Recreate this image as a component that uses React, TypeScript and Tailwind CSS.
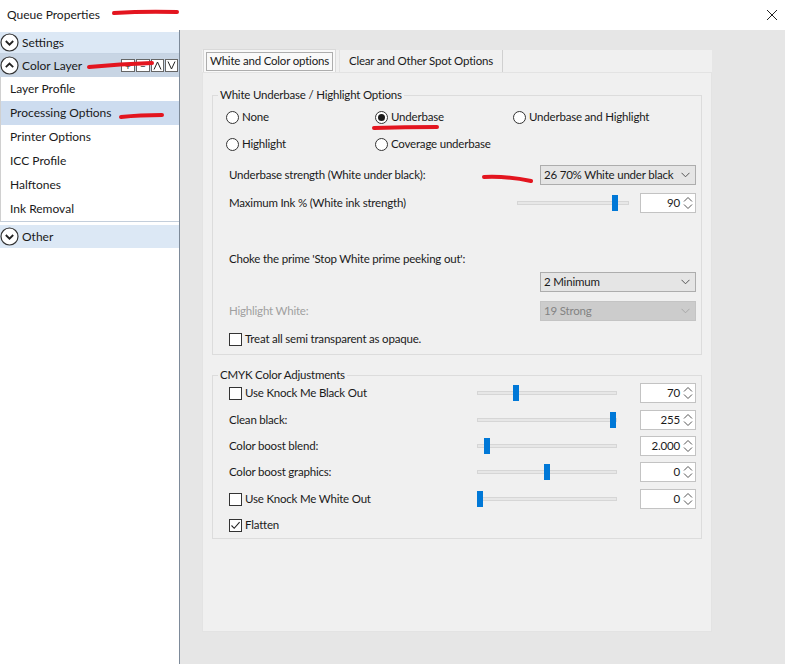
import type { ReactNode } from "react";

const FONT = { fontFamily: 'Lato, "Noto Sans", sans-serif' };

function CircleChevron({ up }: { up?: boolean }) {
  return (
    <svg width="19" height="19" viewBox="0 0 19 19" className="shrink-0">
      <circle cx="9.5" cy="9.5" r="8.5" fill="white" stroke="#333" strokeWidth="1.2" />
      {up ? (
        <path d="M5.8 11.2 L9.5 7.5 L13.2 11.2" fill="none" stroke="#222" strokeWidth="1.8" />
      ) : (
        <path d="M5.8 8 L9.5 11.7 L13.2 8" fill="none" stroke="#222" strokeWidth="1.8" />
      )}
    </svg>
  );
}

function Radio({ checked, label }: { checked?: boolean; label: string }) {
  return (
    <div className="flex items-center h-[20px]">
      <span className="w-[13px] h-[13px] rounded-full border border-[#333] bg-white flex items-center justify-center">
        {checked && <span className="w-[7px] h-[7px] rounded-full bg-[#1a1a1a]" />}
      </span>
      <span className="ml-[3px]">{label}</span>
    </div>
  );
}

function Check({ checked, label }: { checked?: boolean; label: string }) {
  return (
    <div className="flex items-center h-[20px]">
      <span className="w-[13px] h-[13px] border border-[#333] bg-white flex items-center justify-center">
        {checked && (
          <svg width="11" height="11" viewBox="0 0 11 11">
            <path d="M1.5 5.5 L4.2 8.3 L9.6 2.2" fill="none" stroke="#222" strokeWidth="1.1" />
          </svg>
        )}
      </span>
      <span className="ml-[3px]">{label}</span>
    </div>
  );
}

function Select({ value, disabled }: { value: string; disabled?: boolean }) {
  return (
    <div
      className={`w-[156px] h-[20px] flex items-center pl-[3px] pr-[5px] border whitespace-nowrap ${
        disabled ? "bg-[#cccccc] border-[#c4c4c4] text-[#838383]" : "bg-[#e5e5e5] border-[#adadad]"
      }`}
    >
      <span className="flex-1">{value}</span>
      <svg width="9" height="6" viewBox="0 0 9 6" className="shrink-0">
        <path d="M0.5 0.8 L4.5 4.8 L8.5 0.8" fill="none" stroke={disabled ? "#a8a8a8" : "#555"} strokeWidth="1" />
      </svg>
    </div>
  );
}

function Spin({ value }: { value: string }) {
  return (
    <div className="w-[56px] h-[20px] bg-white border border-[#c3c3c3] flex items-center justify-end pr-[2px]">
      <span className="mr-[3px]">{value}</span>
      <svg width="10" height="16" viewBox="0 0 10 16">
        <path d="M1 6.5 L5 2.5 L9 6.5" fill="none" stroke="#555" strokeWidth="1" />
        <path d="M1 9.5 L5 13.5 L9 9.5" fill="none" stroke="#555" strokeWidth="1" />
      </svg>
    </div>
  );
}

function Slider({ width, thumb }: { width: number; thumb: number }) {
  return (
    <div className="relative h-[20px] flex items-center" style={{ width }}>
      <div className="w-full h-[4px] bg-[#e7e7e7] border border-[#d6d6d6]" />
      <div className="absolute top-[2px] w-[6px] h-[16px] bg-[#0078d7]" style={{ left: thumb }} />
    </div>
  );
}

function Group({ title, className, children }: { title: string; className?: string; children: ReactNode }) {
  return (
    <fieldset className={`border border-[#dcdcdc] ${className ?? ""}`}>
      <legend className="-ml-[11px] px-[2px] leading-[16px]">{title}</legend>
      {children}
    </fieldset>
  );
}

function SliderRow({ label, check, thumb, value, className }: { label: string; check?: boolean; thumb: number; value: string; className?: string }) {
  return (
    <div className={`flex items-center h-[20px] ${className ?? ""}`}>
      <div className="flex-1">
        {check ? <Check label={label} /> : <span>{label}</span>}
      </div>
      <Slider width={140} thumb={thumb} />
      <div className="ml-[23px]">
        <Spin value={value} />
      </div>
    </div>
  );
}

export default function App() {
  const items = ["Layer Profile", "Processing Options", "Printer Options", "ICC Profile", "Halftones", "Ink Removal"];
  return (
    <div className="relative w-[785px] h-[664px] flex flex-col bg-white text-[12px] text-[#1a1a1a] overflow-hidden" style={FONT}>
      {/* title bar */}
      <div className="h-[30px] flex items-center pl-[7px] pr-[6px] shrink-0">
        <span className="flex-1">Queue Properties</span>
        <svg width="12" height="12" viewBox="0 0 12 12" className="mr-[1px]">
          <path d="M1 1 L11 11 M11 1 L1 11" stroke="#222" strokeWidth="1" />
        </svg>
      </div>

      <div className="flex-1 flex min-h-0">
        {/* left nav */}
        <div className="w-[180px] shrink-0 bg-white border-r border-[#7d8a99] pt-[2px] flex flex-col">
          <div className="h-[22px] flex items-center bg-[#dce8f5] border-b border-[#c5d3e3]">
            <CircleChevron />
            <span className="ml-[3px]">Settings</span>
          </div>
          <div className="h-[23px] flex items-center bg-[#c8d5e4]">
            <CircleChevron up />
            <span className="ml-[3px] flex-1">Color Layer</span>
            <div className="flex items-center gap-[1px] pr-[1px]">
              <span className="w-[14px] h-[13px] border border-[#666] bg-white flex items-center justify-center text-[10px] leading-none">+</span>
              <span className="w-[14px] h-[13px] border border-[#666] bg-white flex items-center justify-center text-[10px] leading-none">−</span>
              <span className="w-[13px] h-[13px] border border-[#666] bg-white flex items-center justify-center">
                <svg width="9" height="9" viewBox="0 0 9 9"><path d="M1 8.5 L4.5 1 L8 8.5" fill="none" stroke="#222" strokeWidth="1" /></svg>
              </span>
              <span className="w-[13px] h-[13px] border border-[#666] bg-white flex items-center justify-center">
                <svg width="9" height="9" viewBox="0 0 9 9"><path d="M1 0.5 L4.5 8 L8 0.5" fill="none" stroke="#222" strokeWidth="1" /></svg>
              </span>
            </div>
          </div>
          <div className="border-l border-b border-[#c3cedb] border-l-[#d0d0d0]">
            {items.map((it) => (
              <div key={it} className={`h-[24px] flex items-center pl-[9px] ${it === "Processing Options" ? "bg-[#cddcef]" : ""}`}>
                {it}
              </div>
            ))}
          </div>
          <div className="h-[23px] mt-[3px] flex items-center bg-[#dce8f5]">
            <CircleChevron />
            <span className="ml-[3px]">Other</span>
          </div>
        </div>

        {/* main area */}
        <div className="flex-1 bg-[#e6e6e6] pl-[22px] pt-[20px]">
          <div className="w-[510px] h-[582px] bg-[#f0f0f0] flex flex-col text-[11.5px] tracking-[-0.2px]">
            {/* tabs */}
            <div className="h-[22px] flex items-end shrink-0">
              <div className="h-[23px] ml-[1px] px-[2px] flex items-center border border-b-0 border-[#d9d9d9] bg-[#f9f9f9]">
                <span className="px-[3px] h-[19px] flex items-center border border-[#adadad]">White and Color options</span>
              </div>
              <div className="h-[22px] ml-[3px] pl-[9px] pr-[9px] flex items-center border-r border-[#d0d0d0] border-l border-l-[#e3e3e3]">
                Clear and Other Spot Options
              </div>
            </div>

            <div className="flex-1 border border-[#e3e3e3] bg-[#f0f0f0] px-[9px]">
              <Group title="White Underbase / Highlight Options" className="mt-[14px] pl-[16px] pr-[5px] pb-[5px]">
                <div className="pt-[4px]">
                  <div className="flex -ml-[3px]">
                    <div className="w-[149px]"><Radio label="None" /></div>
                    <div className="w-[138px]"><Radio checked label="Underbase" /></div>
                    <Radio label="Underbase and Highlight" />
                  </div>
                  <div className="flex -ml-[3px] mt-[7px]">
                    <div className="w-[149px]"><Radio label="Highlight" /></div>
                    <Radio label="Coverage underbase" />
                  </div>
                  <div className="flex items-center mt-[11px] h-[20px]">
                    <span className="flex-1">Underbase strength (White under black):</span>
                    <Select value="26 70% White under black" />
                  </div>
                  <div className="flex items-center mt-[8px] h-[20px]">
                    <span className="flex-1">Maximum Ink % (White ink strength)</span>
                    <Slider width={112} thumb={95} />
                    <div className="ml-[11px]"><Spin value="90" /></div>
                  </div>
                  <div className="flex items-center mt-[36px] h-[20px]">Choke the prime 'Stop White prime peeking out':</div>
                  <div className="flex justify-end mt-[3px]">
                    <Select value="2 Minimum" />
                  </div>
                  <div className="flex items-center mt-[9px] h-[20px]">
                    <span className="flex-1 text-[#a0a0a0]">Highlight White:</span>
                    <Select value="19 Strong" disabled />
                  </div>
                  <div className="mt-[8px]">
                    <Check label="Treat all semi transparent as opaque." />
                  </div>
                </div>
              </Group>

              <Group title="CMYK Color Adjustments" className="mt-[12px] pl-[16px] pr-[5px] pb-[3px]">
                <div>
                  <SliderRow label="Use Knock Me Black Out" check thumb={36} value="70" />
                  <SliderRow label="Clean black:" thumb={133} value="255" className="mt-[7px]" />
                  <SliderRow label="Color boost blend:" thumb={7} value="2.000" className="mt-[6px]" />
                  <SliderRow label="Color boost graphics:" thumb={67} value="0" className="mt-[6px]" />
                  <SliderRow label="Use Knock Me White Out" check thumb={0} value="0" className="mt-[7px]" />
                  <div className="mt-[6px]">
                    <Check checked label="Flatten" />
                  </div>
                </div>
              </Group>
            </div>
          </div>
        </div>
      </div>

      {/* red annotation marks */}
      <svg className="absolute inset-0 pointer-events-none" width="785" height="664">
        <g fill="none" stroke="#e3151f" strokeWidth="4" strokeLinecap="round">
          <path d="M114 13 Q145 11 177 12" />
          <path d="M89 67 Q120 64 152 63" />
          <path d="M121 117 Q140 115 162 115" />
          <path d="M374 128 Q405 127 437 127" />
          <path d="M484 177 Q508 176 531 181" />
        </g>
      </svg>
    </div>
  );
}
